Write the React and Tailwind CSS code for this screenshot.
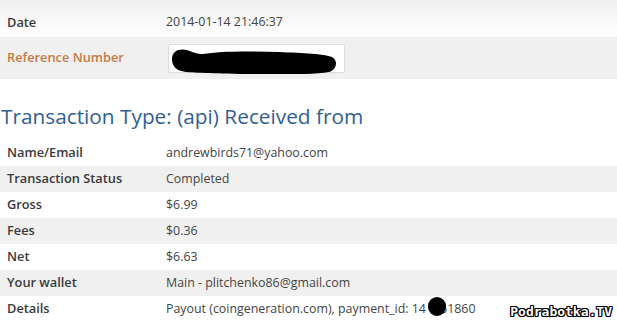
const rows = [
  { label: 'Name/Email', value: 'andrewbirds71@yahoo.com' },
  { label: 'Transaction Status', value: 'Completed', shaded: true },
  { label: 'Gross', value: '$6.99' },
  { label: 'Fees', value: '$0.36', shaded: true },
  { label: 'Net', value: '$6.63' },
  { label: 'Your wallet', value: 'Main - plitchenko86@gmail.com', shaded: true },
]

function Row({ label, value, shaded, children }) {
  return (
    <div className={`flex h-[26px] items-center ${shaded ? 'bg-[#f0f0f0]' : 'bg-white'}`}>
      <div className="w-[166px] pl-[7px] text-[12.8px] font-semibold text-[#3a3a3a]">{label}</div>
      <div className="relative text-[12.4px] text-[#444]">{children || value}</div>
    </div>
  )
}

export default function App() {
  return (
    <div className="relative h-[324px] w-[617px] overflow-hidden bg-white font-['Open_Sans',sans-serif]">
      <div className="flex h-[37px] items-end bg-[linear-gradient(180deg,#efefef_0%,#ffffff_100%)] pb-[5px]">
        <div className="w-[166px] pl-[7px] text-[12.8px] font-semibold text-[#3a3a3a]">Date</div>
        <div className="text-[12.4px] text-[#444]">2014-01-14 21:46:37</div>
      </div>

      <div className="flex h-[42px] items-center bg-[#f0f0f0]">
        <div className="w-[168px] pl-[7px] text-[12.8px] font-semibold text-[#c47a45]">Reference Number</div>
        <div className="relative h-[29px] w-[177px] rounded-[2px] border border-[#dcdcdc] bg-white">
          <svg className="absolute left-0 top-0" width="177" height="29" viewBox="0 0 177 29">
            <path
              d="M3 14 C3 6 10 3 18 5 C24 7 27 9 34 9 C50 6 80 6 110 7 C135 8 155 9 163 12 C170 16 167 25 160 27 C140 30 100 30 70 29 C40 28 20 28 12 26 C6 24 3 20 3 14 Z"
              fill="#000"
            />
          </svg>
        </div>
      </div>

      <h2 className="mt-[24px] h-[37px] pl-[1px] text-[20.8px] leading-[26px] text-[#31608f]">
        Transaction Type: (api) Received from
      </h2>

      {rows.map((r) => (
        <Row key={r.label} {...r} />
      ))}
      <Row label="Details">
        Payout (coingeneration.com), payment_id: 14
        <span className="absolute left-[262px] top-[-3px] h-[19px] w-[18px] rounded-full bg-black" />
        <span className="invisible">00</span>61860
      </Row>

      <div className="absolute bottom-[3px] right-[5px] text-[13px] font-bold text-white font-['DejaVu_Sans_Mono',monospace] [text-shadow:1px_0_0_#000,-1px_0_0_#000,0_1px_0_#000,0_-1px_0_#000,1px_1px_0_#000,-1px_-1px_0_#000,1px_-1px_0_#000,-1px_1px_0_#000]">
        Podrabotka.TV
      </div>
    </div>
  )
}
